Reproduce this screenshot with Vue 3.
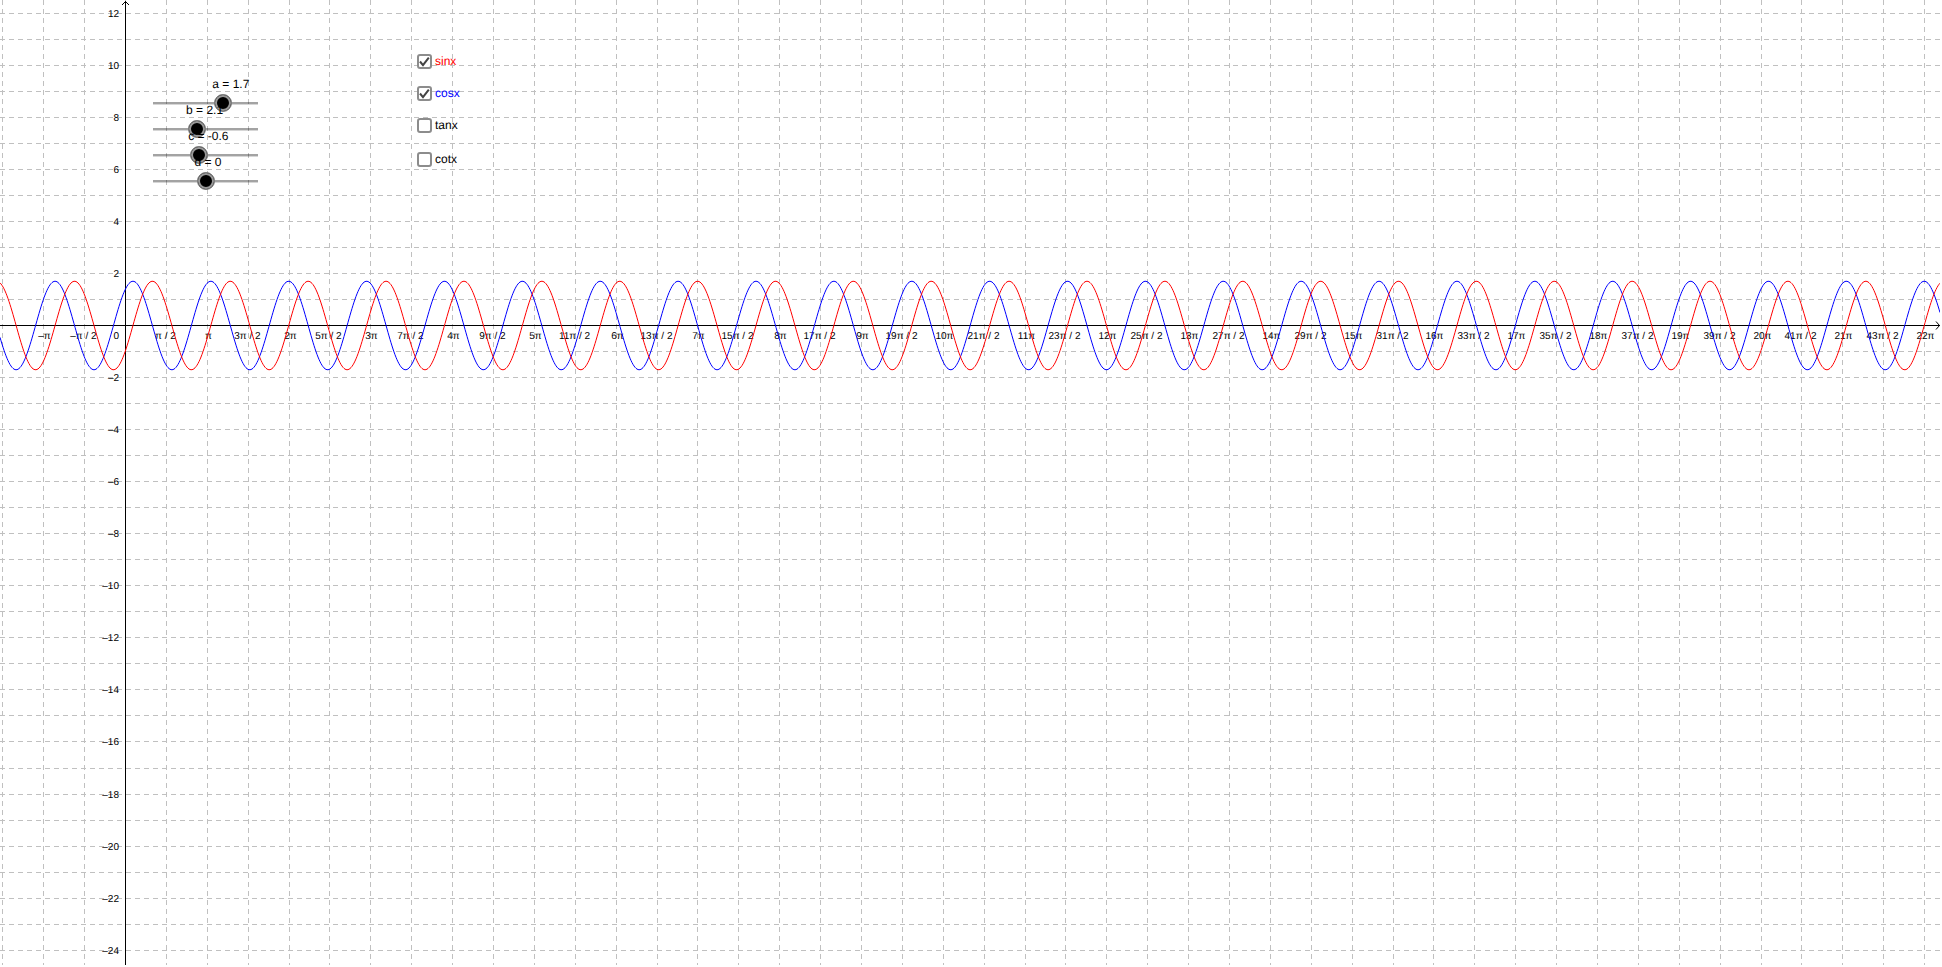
<script setup>
import { computed, onBeforeUnmount, onMounted, reactive, ref } from 'vue'

const UNIT = 26.03
const ORIGIN = { x: 125.5, y: 325.5 }
const MARGIN = 2

const size = ref({ w: window.innerWidth, h: window.innerHeight })
const measure = () => {
  size.value = { w: window.innerWidth, h: window.innerHeight }
}
onMounted(() => window.addEventListener('resize', measure))
onBeforeUnmount(() => window.removeEventListener('resize', measure))

const width = computed(() => size.value.w - MARGIN)
const height = computed(() => size.value.h - MARGIN)

const sliders = reactive([
  { id: 'a', min: -5, max: 5, value: 1.7 },
  { id: 'b', min: 0, max: 5, value: 2.1 },
  { id: 'c', min: -5, max: 5, value: -0.6 },
  { id: 'd', min: -5, max: 5, value: 0 },
])
const share = (s) => (s.value - s.min) / (s.max - s.min)

const curves = reactive([
  { id: 'sinx', color: '#ff0000', on: true, fn: Math.sin },
  { id: 'cosx', color: '#0000ff', on: true, fn: Math.cos },
  { id: 'tanx', color: '#000000', on: false, fn: Math.tan },
  { id: 'cotx', color: '#000000', on: false, fn: (t) => 1 / Math.tan(t) },
])

const snap = (v) => Math.floor(v) + 0.5

const columns = computed(() => {
  const step = (Math.PI / 2) * UNIT
  const list = []
  for (let k = Math.ceil(-ORIGIN.x / step); ORIGIN.x + k * step < width.value; k++) {
    list.push({ k, x: snap(ORIGIN.x + k * step) })
  }
  return list
})

const rows = computed(() => {
  const list = []
  const first = Math.floor(ORIGIN.y / UNIT)
  for (let k = first; ORIGIN.y - k * UNIT < height.value; k--) {
    list.push({ k, y: snap(ORIGIN.y - k * UNIT) })
  }
  return list
})

const xLabels = computed(() =>
  columns.value
    .filter(({ k }) => k !== 0 && k > -3)
    .map(({ k, x }) => {
      const sign = k < 0 ? '–' : ''
      const n = Math.abs(k)
      const half = n % 2 === 1
      const count = half ? n : n / 2
      const text = sign + (count === 1 ? '' : count) + 'π' + (half ? ' / 2' : '')
      return { k, text, x: x + (half ? -1 : 1) }
    })
)

const yLabels = computed(() =>
  rows.value
    .filter(({ k }) => k !== 0 && k % 2 === 0)
    .map(({ k, y }) => ({ k, y: y + 3.5, text: k < 0 ? '–' + -k : String(k) }))
)

const paths = computed(() => {
  const [a, b, c, d] = sliders.map((s) => Number(s.value))
  return curves
    .filter((curve) => curve.on)
    .map((curve) => {
      let path = ''
      let pen = 'M'
      for (let px = 0; px <= width.value; px++) {
        const x = (px - ORIGIN.x) / UNIT
        const py = ORIGIN.y - (a * curve.fn(b * x + c) + d) * UNIT
        if (!Number.isFinite(py) || Math.abs(py) > 4000) {
          pen = 'M'
          continue
        }
        path += `${pen}${px} ${py.toFixed(2)}`
        pen = 'L'
      }
      return { id: curve.id, color: curve.color, path }
    })
    .reverse()
})
</script>

<template>
  <main class="board">
    <svg class="plot" :width="width" :height="height" role="img" aria-label="Function graph">
      <g class="grid">
        <line v-for="r in rows" :key="'r' + r.k" x1="0" :y1="r.y" :x2="width" :y2="r.y" />
        <line v-for="c in columns" :key="'c' + c.k" :x1="c.x" y1="0" :x2="c.x" :y2="height" />
      </g>
      <g class="axis">
        <path :d="`M0 ${ORIGIN.y}H${width}`" />
        <path :d="`M${width - 4} ${ORIGIN.y - 4}L${width - 0.5} ${ORIGIN.y}L${width - 4} ${ORIGIN.y + 4}`" />
        <path :d="`M${ORIGIN.x} 1V${height}`" />
        <path :d="`M${ORIGIN.x - 3.5} 5L${ORIGIN.x} 1.5L${ORIGIN.x + 3.5} 5`" />
      </g>
      <g class="numbers">
        <text v-for="l in yLabels" :key="'y' + l.k" x="119" :y="l.y" text-anchor="end">{{ l.text }}</text>
        <text x="119" y="339" text-anchor="end">0</text>
        <text v-for="l in xLabels" :key="'x' + l.k" :x="l.x" y="339" text-anchor="middle">{{ l.text }}</text>
      </g>
      <path v-for="p in paths" :key="p.id" :d="p.path" :stroke="p.color" class="curve" />
    </svg>

    <section class="sliders">
      <div v-for="s in sliders" :key="s.id" class="slider">
        <input :id="'slider-' + s.id" v-model.number="s.value" type="range" :min="s.min" :max="s.max" step="0.1" />
        <label :for="'slider-' + s.id" :style="{ left: share(s) * 100 + '%' }">{{ s.id }} = {{ s.value }}</label>
      </div>
    </section>

    <section class="toggles">
      <label v-for="c in curves" :key="c.id" class="toggle" :style="{ color: c.color }">
        <span class="box">
          <input v-model="c.on" type="checkbox" />
          <svg v-if="c.on" viewBox="0 0 15 15" aria-hidden="true"><path d="M3 7.5L6 11.2L11.8 3.6" /></svg>
        </span>
        {{ c.id }}
      </label>
    </section>
  </main>
</template>

<style>
body {
  margin: 0;
  background: #fff;
}
</style>

<style scoped>
.board {
  position: relative;
  height: 100vh;
  overflow: hidden;
  font-family: "Liberation Sans", Arial, sans-serif;
  font-size: 12px;
  color: #000;
  text-rendering: geometricPrecision;
}
.plot {
  display: block;
}
.grid line {
  stroke: #c0c0c0;
  stroke-width: 1;
  stroke-dasharray: 5 4;
}
.axis path {
  fill: none;
  stroke: #000;
  stroke-width: 1;
}
.numbers {
  font-size: 10px;
  fill: #000;
}
.curve {
  fill: none;
  stroke-width: 1;
}
.sliders {
  position: absolute;
  left: 144px;
  top: 90px;
  width: 123px;
}
.slider {
  position: relative;
  height: 26px;
  margin: 0 9px;
}
.slider input {
  appearance: none;
  display: block;
  width: calc(100% + 18px);
  height: 26px;
  margin: 0 -9px;
  background: linear-gradient(rgba(0, 0, 0, 0.36) 67%, rgba(0, 0, 0, 0.16) 67%) center / calc(100% - 18px) 3px no-repeat;
}
.slider input::-webkit-slider-thumb {
  appearance: none;
  box-sizing: border-box;
  width: 18px;
  height: 18px;
  border: 1px solid #808080;
  border-radius: 50%;
  background: #000;
  box-shadow: inset 0 0 0 2px #999;
}
.slider label {
  position: absolute;
  top: -13px;
  margin-left: -11px;
  line-height: 14px;
  white-space: nowrap;
}
.toggles {
  position: absolute;
  left: 417px;
  top: 54px;
  display: flex;
  flex-direction: column;
  gap: 17px;
}
.toggle {
  display: flex;
  align-items: center;
  gap: 3px;
  line-height: 15px;
}
.toggle:last-child {
  margin-top: 2px;
}
.box {
  position: relative;
  width: 15px;
  height: 15px;
}
.box input {
  appearance: none;
  box-sizing: border-box;
  display: block;
  width: 15px;
  height: 15px;
  margin: 0;
  border: 2px solid #8c8c8c;
  border-radius: 3px;
  background: #fff;
}
.box svg {
  position: absolute;
  inset: 0;
  pointer-events: none;
}
.box path {
  fill: none;
  stroke: #444;
  stroke-width: 2;
}
</style>
